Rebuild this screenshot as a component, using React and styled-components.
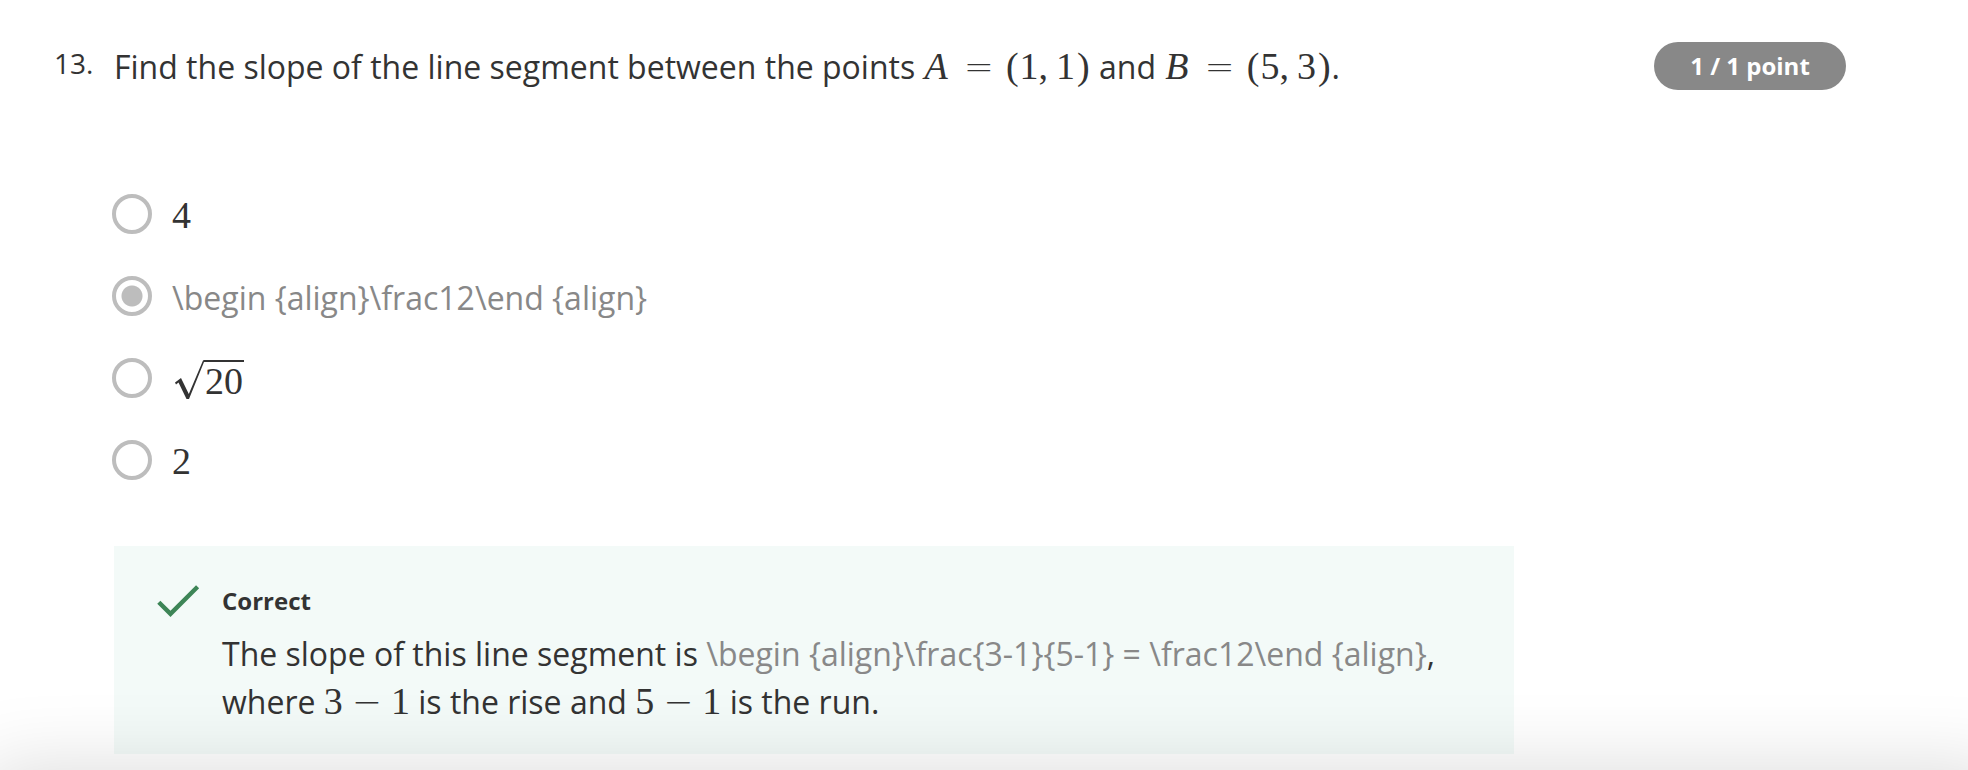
import React from "react";
import styled, { createGlobalStyle } from "styled-components";

const GlobalStyle = createGlobalStyle`
  * { box-sizing: border-box; }
  body {
    margin: 0;
    background: #fff;
    color: #333;
    font-family: "Open Sans", sans-serif;
    font-size: 32px;
    line-height: 48px;
  }
`;

const Question = styled.main`
  display: flex;
  align-items: flex-start;
  padding: 42px 122px 16px 54px;
`;

const QuestionNumber = styled.div`
  flex: none;
  width: 60px;
  font-size: 28px;
  line-height: 42px;
`;

const QuestionBody = styled.div`
  flex: 1;
  min-width: 0;
`;

const Prompt = styled.legend`
  padding: 1px 0 0;
  margin-bottom: 93px;
`;

const Points = styled.div`
  flex: none;
  width: 192px;
  border-radius: 24px;
  background: #888;
  color: #fff;
  font-size: 24px;
  font-weight: 700;
  text-align: center;
`;

const Options = styled.fieldset`
  margin: 0 0 56px;
  padding: 0;
  border: 0;
`;

const Option = styled.label`
  display: flex;
  align-items: center;
  width: fit-content;
  height: 60px;
  margin-bottom: 22px;
  cursor: pointer;

  &:last-child { margin-bottom: 0; }
`;

const Radio = styled.input`
  appearance: none;
  flex: none;
  width: 40px;
  height: 40px;
  margin: 0 20px 0 -2px;
  border: 4px solid #bdbdbd;
  border-radius: 50%;
  background: #fff;

  &:checked {
    background: radial-gradient(circle, #bdbdbd 10px, #fff 11px);
  }
`;

const OptionText = styled.span`
  padding-top: 4px;
`;

const RawTex = styled.span`
  color: #888;
`;

const Formula = styled.span`
  font-family: "Liberation Serif", serif;
  font-size: 38px;
  line-height: 44px;
  white-space: nowrap;
`;

const Variable = styled.i`
  margin: 0 6px 0 1px;
`;

const Operator = styled.span`
  margin: 0 ${(p) => p.$gap}px;
  font-family: "DejaVu Sans", sans-serif;
  font-size: 36px;
  font-weight: 200;
  line-height: 36px;
`;

const Paren = styled.span`
  padding: 0 1px 0 2px;
`;

const Comma = styled.span`
  margin-right: 8px;
`;

const Root = styled.span`
  display: flex;
`;

const RootSign = styled.svg`
  width: 32px;
  height: 40px;
`;

const Radicand = styled(Formula)`
  height: 40px;
  border-top: 2px solid #333;
  padding: 0 1px;
  line-height: 38px;
`;

const Feedback = styled.section`
  display: flex;
  max-width: 1400px;
  padding: 32px 40px 28px;
  background: #f3faf8;
`;

const CheckIcon = styled.svg`
  flex: none;
  width: 48px;
  height: 48px;
  margin-right: 20px;
`;

const FeedbackTitle = styled.h2`
  margin: 0 0 6px;
  font-size: 24px;
  line-height: 46px;
`;

const FeedbackText = styled.p`
  margin: 0;
`;

const BottomShade = styled.div`
  position: fixed;
  top: 100%;
  left: -16px;
  right: -40px;
  height: 100px;
  box-shadow: 0 0 80px rgba(0, 0, 0, 0.15);
  pointer-events: none;
`;

function Point({ name, x, y }) {
  return (
    <Formula>
      <Variable>{name}</Variable>
      <Operator $gap={10}>=</Operator>
      <Paren>(</Paren>
      {x}
      <Comma>,</Comma>
      {y}
      <Paren>)</Paren>
    </Formula>
  );
}

function Difference({ from, minus }) {
  return (
    <Formula>
      {from}
      <Operator $gap={9}>−</Operator>
      {minus}
    </Formula>
  );
}

function SquareRoot({ children }) {
  return (
    <Root>
      <RootSign viewBox="0 0 32 40" aria-hidden="true">
        <path
          d="M3 22.6 L9 18 L16.8 34 L31 0.5 L32 0 L32 2 L17 39 L14.5 39 L6.5 22.5 L4 24.4 Z"
          fill="#333"
        />
      </RootSign>
      <Radicand>{children}</Radicand>
    </Root>
  );
}

const options = [
  { id: "four", content: <Formula>4</Formula> },
  { id: "half", content: <RawTex>{"\\begin {align}\\frac12\\end {align}"}</RawTex>, chosen: true },
  { id: "root", content: <SquareRoot>20</SquareRoot> },
  { id: "two", content: <Formula>2</Formula> },
];

export default function App() {
  return (
    <>
      <GlobalStyle />
      <Question>
        <QuestionNumber>13.</QuestionNumber>
        <QuestionBody>
          <Options>
            <Prompt>
              Find the slope of the line segment between the points{" "}
              <Point name="A" x="1" y="1" /> and <Point name="B" x="5" y="3" />.
            </Prompt>
            {options.map((option) => (
              <Option key={option.id}>
                <Radio type="radio" name="slope" value={option.id} defaultChecked={option.chosen} />
                <OptionText>{option.content}</OptionText>
              </Option>
            ))}
          </Options>
          <Feedback>
            <CheckIcon viewBox="0 0 48 48" aria-hidden="true">
              <path d="M4.8 24.2 L16.5 35.9 L43.6 8.8" fill="none" stroke="#3d8557" strokeWidth="4.4" />
            </CheckIcon>
            <div>
              <FeedbackTitle>Correct</FeedbackTitle>
              <FeedbackText>
                The slope of this line segment is{" "}
                <RawTex>{"\\begin {align}\\frac{3-1}{5-1} = \\frac12\\end {align}"}</RawTex>
                {","} <span>where</span>{" "}
                <Difference from="3" minus="1" /> is the rise and{" "}
                <Difference from="5" minus="1" /> is the run.
              </FeedbackText>
            </div>
          </Feedback>
        </QuestionBody>
        <Points>1 / 1 point</Points>
      </Question>
      <BottomShade />
    </>
  );
}
